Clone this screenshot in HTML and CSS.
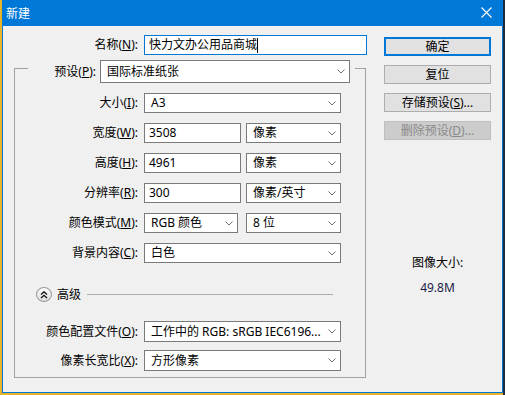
FILE: index.html
```html
<!DOCTYPE html>
<html lang="zh-CN">
<head>
<meta charset="utf-8">
<title>新建</title>
<link rel="stylesheet" href="styles.css">
</head>
<body>
<div class="window">
  <div class="titlebar">
    <span class="title">新建</span>
    <svg class="close" width="11" height="11" viewBox="0 0 11 11"><path d="M0.5 0.5 L10.5 10.5 M10.5 0.5 L0.5 10.5" stroke="#fff" stroke-width="1.1" fill="none"/></svg>
  </div>
  <div class="content">
    <div class="form">
      <div class="row name-row">
        <span class="lbl lbl-wide">名称(<u>N</u>):</span>
        <div class="field input focused name-input">快力文办公用品商城<span class="caret"></span></div>
      </div>
      <div class="group">
        <div class="group-head">
          <span class="lbl preset-lbl">预设(<u>P</u>):</span>
          <div class="field select preset-select"><span>国际标准纸张</span><svg class="chev" width="8" height="5" viewBox="0 0 8 5"><polyline points="0.5,0.5 4,4 7.5,0.5" fill="none" stroke="#6d6d6d" stroke-width="1"/></svg></div>
        </div>
        <div class="group-body">
          <div class="row">
            <span class="lbl">大小(<u>I</u>):</span>
            <div class="field select full"><span>A3</span><svg class="chev" width="8" height="5" viewBox="0 0 8 5"><polyline points="0.5,0.5 4,4 7.5,0.5" fill="none" stroke="#6d6d6d" stroke-width="1"/></svg></div>
          </div>
          <div class="row">
            <span class="lbl">宽度(<u>W</u>):</span>
            <div class="field input num">3508</div>
            <div class="field select unit"><span>像素</span><svg class="chev" width="8" height="5" viewBox="0 0 8 5"><polyline points="0.5,0.5 4,4 7.5,0.5" fill="none" stroke="#6d6d6d" stroke-width="1"/></svg></div>
          </div>
          <div class="row">
            <span class="lbl">高度(<u>H</u>):</span>
            <div class="field input num">4961</div>
            <div class="field select unit"><span>像素</span><svg class="chev" width="8" height="5" viewBox="0 0 8 5"><polyline points="0.5,0.5 4,4 7.5,0.5" fill="none" stroke="#6d6d6d" stroke-width="1"/></svg></div>
          </div>
          <div class="row">
            <span class="lbl">分辨率(<u>R</u>):</span>
            <div class="field input num">300</div>
            <div class="field select unit"><span>像素/英寸</span><svg class="chev" width="8" height="5" viewBox="0 0 8 5"><polyline points="0.5,0.5 4,4 7.5,0.5" fill="none" stroke="#6d6d6d" stroke-width="1"/></svg></div>
          </div>
          <div class="row">
            <span class="lbl">颜色模式(<u>M</u>):</span>
            <div class="field select mode"><span>RGB 颜色</span><svg class="chev" width="8" height="5" viewBox="0 0 8 5"><polyline points="0.5,0.5 4,4 7.5,0.5" fill="none" stroke="#6d6d6d" stroke-width="1"/></svg></div>
            <div class="field select unit bits"><span>8 位</span><svg class="chev" width="8" height="5" viewBox="0 0 8 5"><polyline points="0.5,0.5 4,4 7.5,0.5" fill="none" stroke="#6d6d6d" stroke-width="1"/></svg></div>
          </div>
          <div class="row">
            <span class="lbl">背景内容(<u>C</u>):</span>
            <div class="field select full"><span>白色</span><svg class="chev" width="8" height="5" viewBox="0 0 8 5"><polyline points="0.5,0.5 4,4 7.5,0.5" fill="none" stroke="#6d6d6d" stroke-width="1"/></svg></div>
          </div>
          <div class="advanced">
            <span class="toggle"><svg width="8" height="8" viewBox="0 0 8 8"><polyline points="1,3.5 4,0.8 7,3.5" fill="none" stroke="#111" stroke-width="1.3"/><polyline points="1,7 4,4.3 7,7" fill="none" stroke="#111" stroke-width="1.3"/></svg></span>
            <span class="adv-text">高级</span>
            <span class="rule"></span>
          </div>
          <div class="row row-adv">
            <span class="lbl">颜色配置文件(<u>O</u>):</span>
            <div class="field select full tall"><span>工作中的 RGB: sRGB IEC6196...</span><svg class="chev" width="8" height="5" viewBox="0 0 8 5"><polyline points="0.5,0.5 4,4 7.5,0.5" fill="none" stroke="#6d6d6d" stroke-width="1"/></svg></div>
          </div>
          <div class="row row-adv2">
            <span class="lbl">像素长宽比(<u>X</u>):</span>
            <div class="field select full tall"><span>方形像素</span><svg class="chev" width="8" height="5" viewBox="0 0 8 5"><polyline points="0.5,0.5 4,4 7.5,0.5" fill="none" stroke="#6d6d6d" stroke-width="1"/></svg></div>
          </div>
        </div>
      </div>
    </div>
    <div class="side">
      <div class="btn default">确定</div>
      <div class="btn">复位</div>
      <div class="btn">存储预设(<u>S</u>)...</div>
      <div class="btn disabled">删除预设(<u>D</u>)...</div>
      <div class="info">
        <div class="info-label">图像大小:</div>
        <div class="info-size">49.8M</div>
      </div>
    </div>
  </div>
</div>
</body>
</html>
```

FILE: styles.css
```css
* { box-sizing: border-box; }
html, body { margin: 0; padding: 0; }
body {
  width: 505px;
  height: 395px;
  overflow: hidden;
  background: linear-gradient(to right, #e8b52a 0, #e8b52a 503px, #1d2b3c 503px);
  font-family: "Noto Sans", "Noto Sans CJK SC", sans-serif;
  font-size: 12px;
  color: #000;
}
u { text-decoration: underline; text-underline-offset: 1px; }

.window {
  margin-left: 2px;
  width: 501px;
  height: 393px;
  background: #f0f0f0;
  border: 1px solid #0078d7;
  border-top: none;
  display: flex;
  flex-direction: column;
}
.titlebar {
  height: 26px;
  margin: 0 -1px;
  background: #0078d7;
  display: flex;
  align-items: center;
  justify-content: space-between;
  padding: 0 11px 1px 4px;
  color: #fff;
}
.title { font-family: "Noto Sans CJK SC", sans-serif; font-size: 12px; line-height: 14px; }
.close { display: block; }

.content {
  display: flex;
  padding: 9px 0 0 11px;
}
.form { width: 353px; }
.row {
  display: flex;
  align-items: center;
  height: 20px;
}
.lbl {
  width: 123px;
  margin-right: 6px;
  text-align: right;
  line-height: 14px;
  white-space: nowrap;
}
.lbl-wide { width: 124px; }
.name-row { margin-bottom: 5px; }

.field {
  height: 20px;
  background: #fff;
  border: 1px solid #7a7a7a;
  display: flex;
  align-items: center;
  line-height: 14px;
  white-space: nowrap;
}
.input { padding-left: 4px; }
.select { padding: 0 4px 0 6px; justify-content: space-between; }
.select .chev { flex: none; }
.focused { border-color: #0078d7; }
.name-input { width: 223px; }
.caret { display: inline-block; width: 1px; height: 15px; background: #000; margin-left: 0; }

.group { width: 352px; }
.group-head {
  display: flex;
  height: 23px;
}
.group-head::before {
  content: "";
  width: 13px;
  margin-top: 8px;
  border-top: 1px solid #a0a0a0;
  border-left: 1px solid #a0a0a0;
}
.group-head::after {
  content: "";
  flex: 1;
  margin-top: 8px;
  margin-left: 5px;
  border-top: 1px solid #a0a0a0;
  border-right: 1px solid #a0a0a0;
}
.preset-lbl { width: 68px; margin-right: 4px; align-self: center; }
.preset-select { width: 250px; height: 23px; }

.group-body {
  border: 1px solid #a0a0a0;
  border-top: none;
  padding: 10px 0 6px 0;
  display: flex;
  flex-direction: column;
  gap: 10px;
}
.full { width: 197px; }
.num { width: 97px; margin-right: 5px; }
.unit { width: 95px; }
.mode { width: 94px; margin-right: 8px; }
.tall { height: 21px; }

.advanced {
  display: flex;
  align-items: center;
  height: 15px;
  margin-top: 14px;
  padding-left: 21px;
  padding-right: 32px;
}
.toggle {
  width: 16px;
  height: 15px;
  border-radius: 50%;
  border: 1px solid #9a9a9a;
  background: linear-gradient(#ffffff, #dcdcdc);
  display: flex;
  align-items: center;
  justify-content: center;
}
.toggle svg { display: block; }
.adv-text { margin-left: 5px; line-height: 14px; }
.rule { flex: 1; height: 1px; background: #adadad; margin-left: 6px; }
.row-adv { margin-top: 9px; height: 21px; }
.row-adv2 { margin-top: -2px; height: 21px; }

.side {
  margin-left: 17px;
  width: 107px;
  padding-top: 2px;
  display: flex;
  flex-direction: column;
  gap: 9px;
}
.btn {
  height: 19px;
  background: #e1e1e1;
  border: 1px solid #adadad;
  display: flex;
  align-items: center;
  justify-content: center;
  line-height: 14px;
}
.btn.default { border: 2px solid #0078d7; }
.btn.disabled { background: #cccccc; border-color: #bfbfbf; color: #8a8a8a; }
.info {
  margin-top: 107px;
  text-align: center;
  line-height: 14px;
}
.info-size { margin-top: 11px; color: #1c1c48; }
```
